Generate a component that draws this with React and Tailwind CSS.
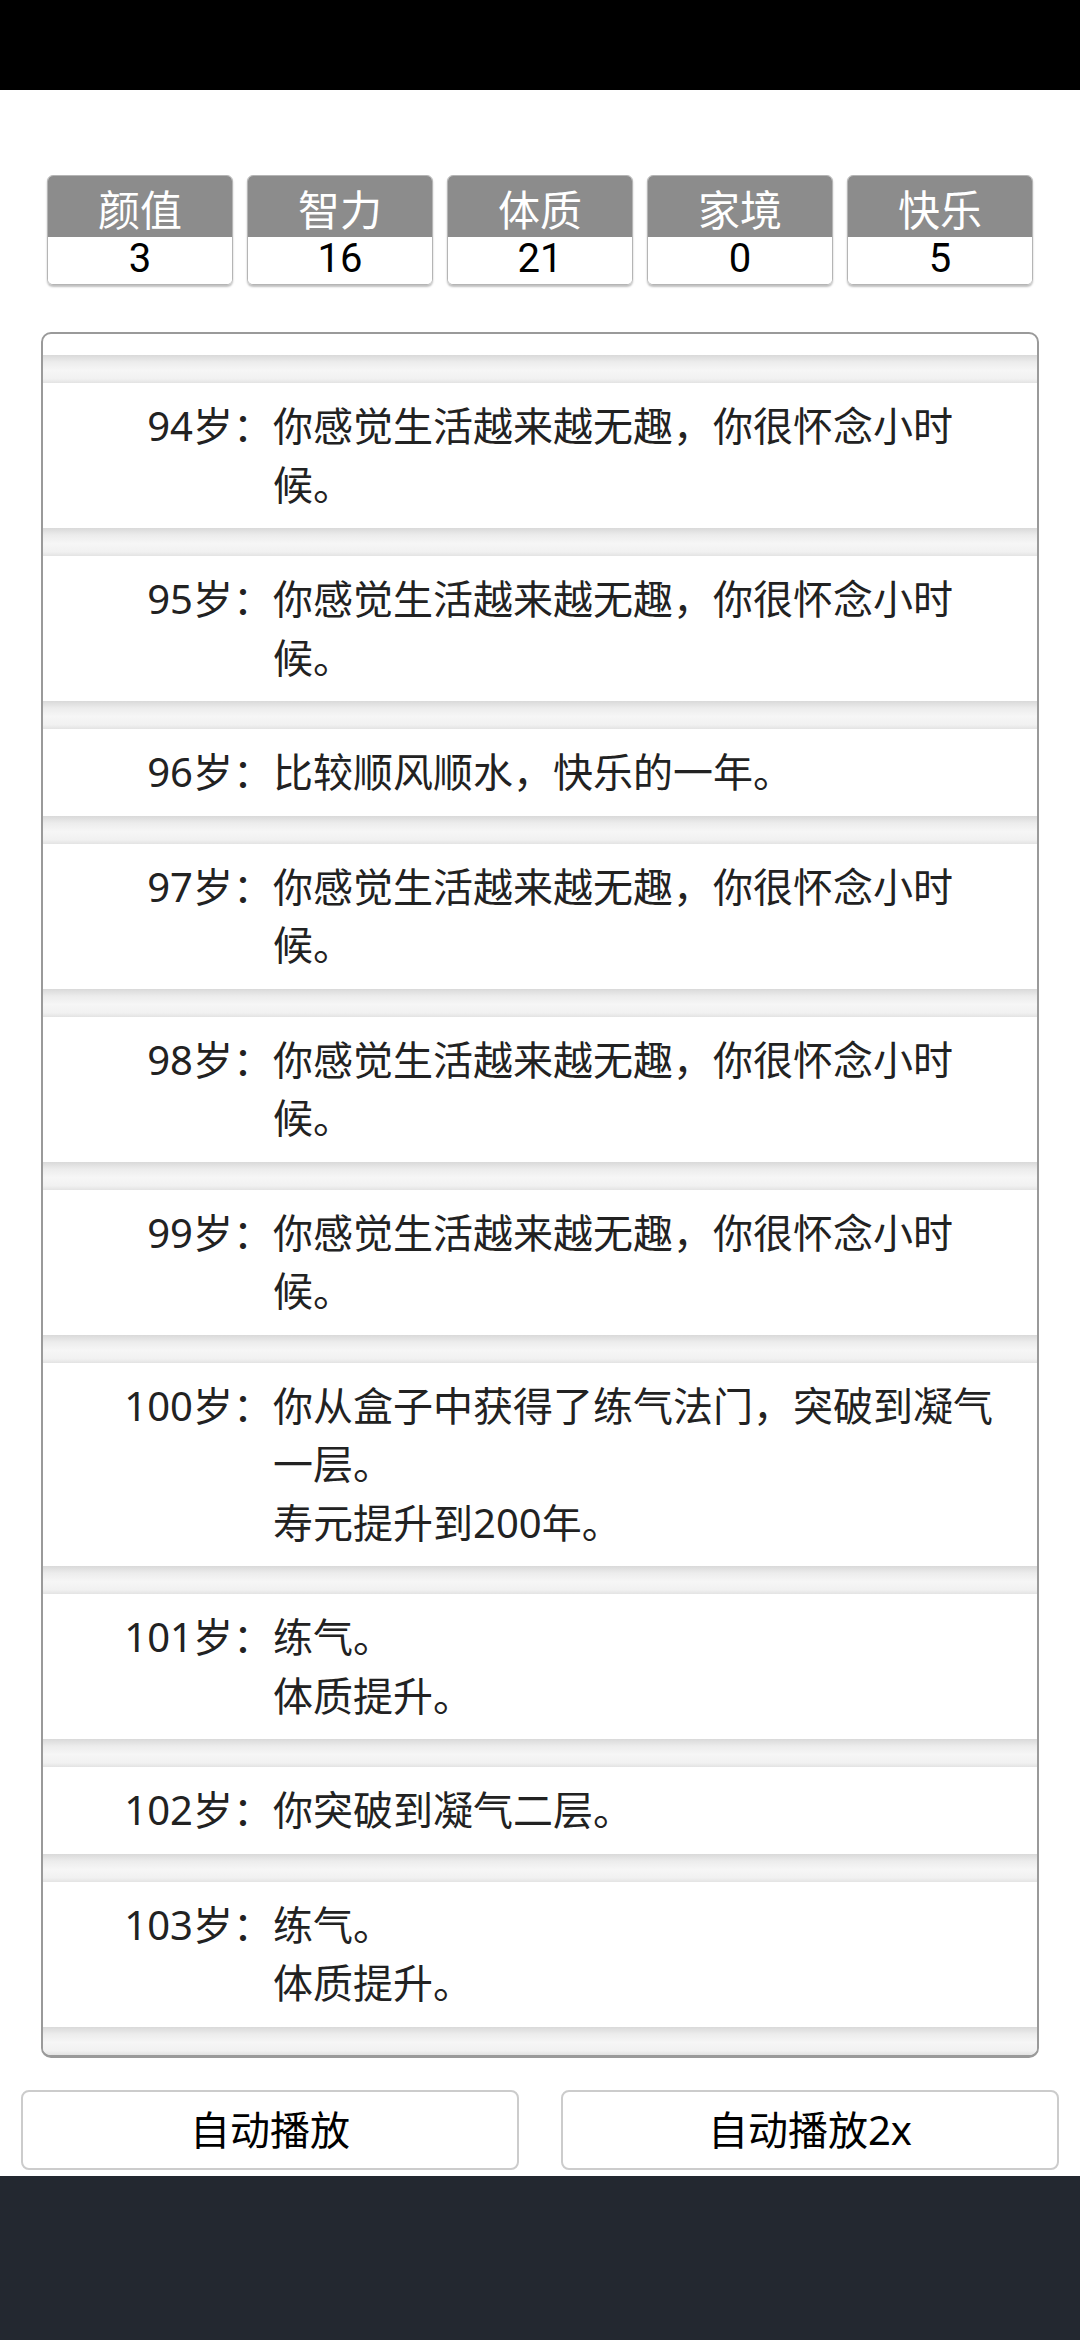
import React from "react";

const stats = [
  ["颜值", "3"],
  ["智力", "16"],
  ["体质", "21"],
  ["家境", "0"],
  ["快乐", "5"],
];

const items = [
  ["94岁：", ["你感觉生活越来越无趣，你很怀念小时候。"]],
  ["95岁：", ["你感觉生活越来越无趣，你很怀念小时候。"]],
  ["96岁：", ["比较顺风顺水，快乐的一年。"]],
  ["97岁：", ["你感觉生活越来越无趣，你很怀念小时候。"]],
  ["98岁：", ["你感觉生活越来越无趣，你很怀念小时候。"]],
  ["99岁：", ["你感觉生活越来越无趣，你很怀念小时候。"]],
  ["100岁：", ["你从盒子中获得了练气法门，突破到凝气一层。", "寿元提升到200年。"]],
  ["101岁：", ["练气。", "体质提升。"]],
  ["102岁：", ["你突破到凝气二层。"]],
  ["103岁：", ["练气。", "体质提升。"]],
];

function Band() {
  return (
    <div className="h-[28px] bg-[linear-gradient(to_bottom,#d9d9d9_0%,#ececec_25%,#f6f6f6_55%,#f1f1f1_85%,#e3e3e3_100%)]" />
  );
}

export default function App() {
  return (
    <div className="w-[1080px] h-[2340px] flex flex-col bg-white font-['Noto_Sans','Noto_Sans_CJK_SC',sans-serif] text-[#222]">
      <div className="h-[90px] bg-black shrink-0" />

      <div className="flex gap-[14px] px-[47px] pt-[85px] shrink-0">
        {stats.map(([k, v]) => (
          <div
            key={k}
            className="flex-1 h-[110px] flex flex-col rounded-[6px] border border-[#b5b5b5] overflow-hidden shadow-[0_2px_2px_rgba(0,0,0,0.25)]"
          >
            <div className="h-[61px] shrink-0 bg-[#8c8c8c] text-white text-[42px] leading-[68px] text-center overflow-hidden">
              {k}
            </div>
            <div className="flex-1 bg-white text-black text-[40px] leading-[44px] text-center font-['Roboto','Noto_Sans_CJK_SC',sans-serif]">
              {v}
            </div>
          </div>
        ))}
      </div>

      <div className="mx-[41px] mt-[47px] border-2 border-[#9a9a9a] border-b-[3px] rounded-[10px] pt-[21px] shrink-0 overflow-hidden">
        <Band />
        {items.map(([age, lines]) => (
          <React.Fragment key={age}>
            <div className="flex py-[14px] text-[40px] leading-[58.5px] bg-white">
              <div className="w-[230px] shrink-0 text-right">{age}</div>
              <div className="w-[742px] shrink-0">
                {lines.map((l, i) => (
                  <div key={i}>{l}</div>
                ))}
              </div>
            </div>
            <Band />
          </React.Fragment>
        ))}
      </div>

      <div className="flex gap-[42px] px-[21px] mt-[32px] shrink-0">
        {["自动播放", "自动播放2x"].map((t) => (
          <div
            key={t}
            className="flex-1 h-[80px] rounded-[8px] border-2 border-[#cccccc] bg-white flex items-center justify-center text-[40px] text-black"
          >
            {t}
          </div>
        ))}
      </div>

      <div className="flex-1 mt-[6px] bg-[#232830]" />
    </div>
  );
}
